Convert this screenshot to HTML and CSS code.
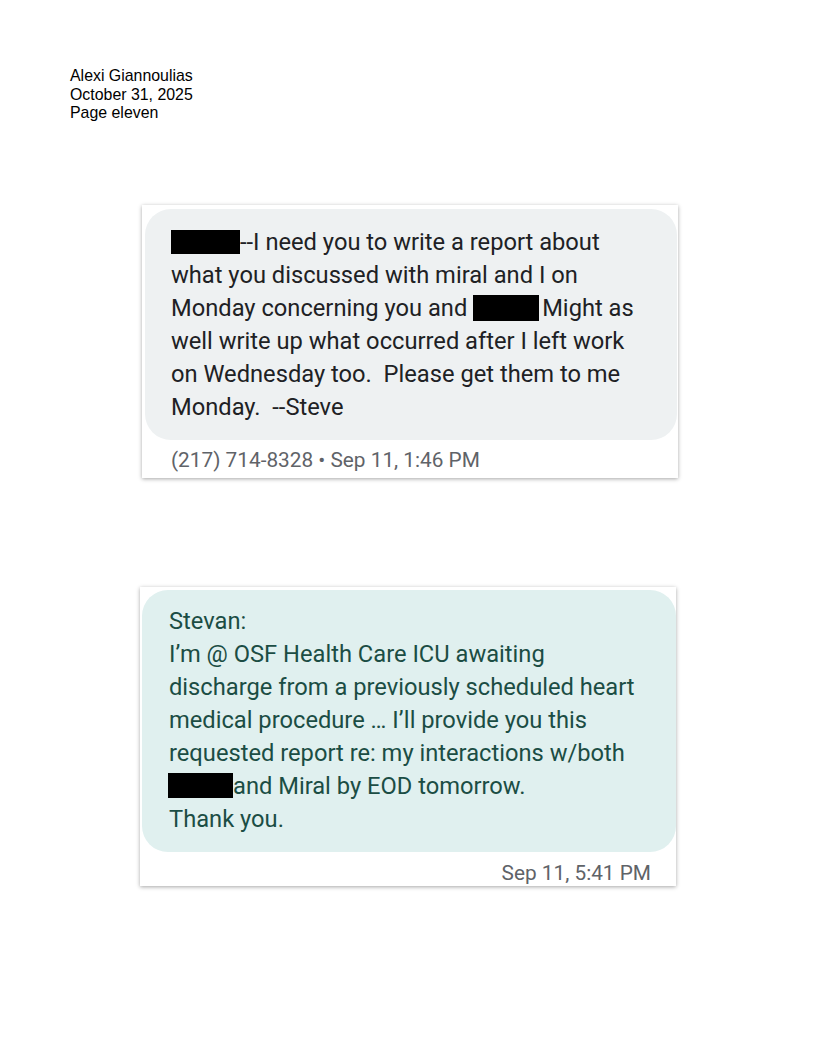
FILE: index.html
```html
<!DOCTYPE html>
<html>
<head>
<meta charset="utf-8">
<link rel="stylesheet" href="styles.css">
</head>
<body>
<div class="page">
  <div class="letterhead">
    <div>Alexi Giannoulias</div>
    <div>October 31, 2025</div>
    <div>Page eleven</div>
  </div>

  <div class="card card-one">
    <div class="bubble bubble-grey">
      <div class="line"><span class="redact r1"></span>--I need you to write a report about</div>
      <div class="line">what you discussed with miral and I on</div>
      <div class="line">Monday concerning you and <span class="redact r2"></span>Might as</div>
      <div class="line">well write up what occurred after I left work</div>
      <div class="line">on Wednesday too.&nbsp; Please get them to me</div>
      <div class="line">Monday.&nbsp; --Steve</div>
    </div>
    <div class="meta meta-left">(217) 714-8328 • Sep 11, 1:46 PM</div>
  </div>

  <div class="card card-two">
    <div class="bubble bubble-teal">
      <div class="line">Stevan:</div>
      <div class="line">I’m @ OSF Health Care ICU awaiting</div>
      <div class="line">discharge from a previously scheduled heart</div>
      <div class="line">medical procedure … I’ll provide you this</div>
      <div class="line">requested report re: my interactions w/both</div>
      <div class="line"><span class="redact r3"></span>and Miral by EOD tomorrow.</div>
      <div class="line">Thank you.</div>
    </div>
    <div class="meta meta-right">Sep 11, 5:41 PM</div>
  </div>
</div>
</body>
</html>
```

FILE: styles.css
```css
html, body {
  margin: 0;
  padding: 0;
  background: #ffffff;
}

.page {
  width: 816px;
  height: 1056px;
  padding-top: 67px;
  box-sizing: border-box;
}

.letterhead {
  margin-left: 70px;
  font-family: "Liberation Sans", Arial, sans-serif;
  font-size: 15.9px;
  line-height: 18.5px;
  color: #000;
}

.card {
  width: 536px;
  background: #ffffff;
  box-shadow: 0 1px 4px rgba(0, 0, 0, 0.35);
  font-family: Roboto, "Noto Sans", sans-serif;
  box-sizing: border-box;
}

.card-one {
  margin-top: 82px;
  margin-left: 142px;
  padding: 4px 1px 6px 3px;
}

.card-two {
  margin-top: 109px;
  margin-left: 140px;
  padding: 3px 0 1px 2px;
}

.bubble {
  border-radius: 26px;
  font-size: 23.7px;
  line-height: 33px;
}

.line {
  white-space: nowrap;
}

.bubble-grey {
  background: #eef1f2;
  color: #202124;
  padding: 17px 10px 16px 26px;
}

.bubble-teal {
  background: #e0f0ef;
  color: #1b4d44;
  padding: 15px 10px 16px 27px;
}

.redact {
  display: inline-block;
  background: #000;
  vertical-align: middle;
}

.r1 { width: 69px; height: 24px; margin-top: -3px; }
.r2 { width: 66px; height: 26px; margin-right: 3px; margin-top: -3px; }
.r3 { width: 65px; height: 25px; margin-left: -1px; margin-top: -3px; }

.meta {
  font-size: 20.8px;
  line-height: 24px;
  color: #5f6368;
}

.meta-left {
  margin-top: 8px;
  padding-left: 26px;
}

.meta-right {
  margin-top: 9px;
  text-align: right;
  padding-right: 25px;
}
```
